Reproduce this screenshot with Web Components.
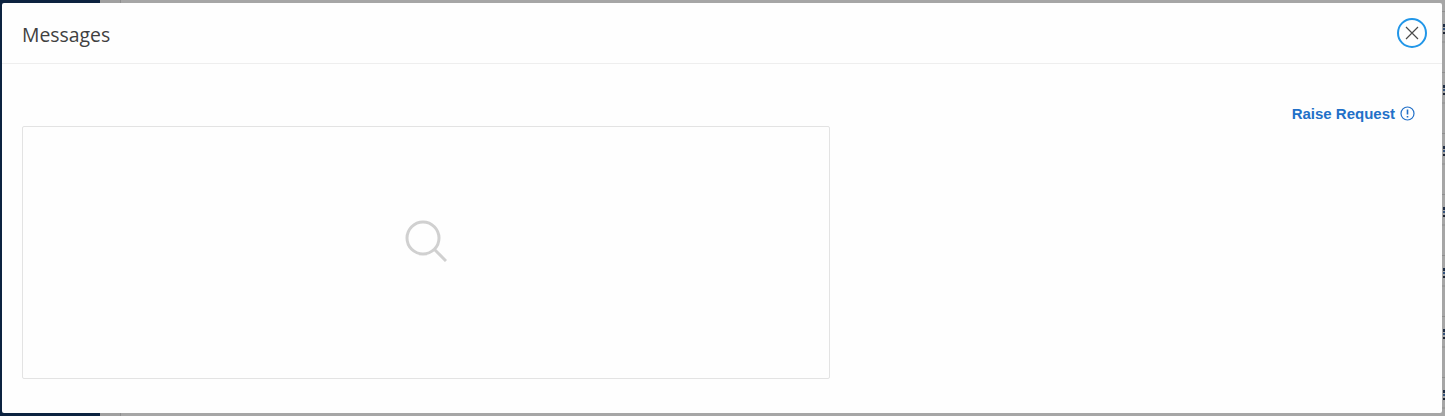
<!DOCTYPE html>
<html>
<head>
<meta charset="utf-8">
<title>Messages</title>
<style>
  html, body { margin: 0; height: 100%; overflow: hidden; }
</style>
</head>
<body>
<app-backdrop>
  <message-dialog heading="Messages">
    <raise-request slot="actions"></raise-request>
    <empty-panel></empty-panel>
  </message-dialog>
</app-backdrop>

<script>
/* Dimmed page behind the dialog: navy sidebar, grey content, and the
 * dots of the table row menus peeking out on the right edge
 */
class AppBackdrop extends HTMLElement {
  constructor() {
    super()
    this.attachShadow({ mode: 'open' })
    this.shadowRoot.innerHTML = `
      <style>
        :host {
          display: block;
          position: relative;
          width: 1445px;
          height: 416px;
          box-sizing: border-box;
          padding: 3px 3px 3px 2px;
          overflow: hidden;
          background:
            linear-gradient(to bottom, #1f2d44 0 3px, transparent 3px 4px, #33527a 4px 6px, transparent 6px 8px, #1f2533 8px 10px, transparent 10px) 1443px 24px / 2px 61px repeat-y,
            linear-gradient(to bottom, #8f8f8f 0 1px, transparent 1px) 1442px 11px / 3px 30.5px repeat-y,
            linear-gradient(to right, #0c2340 0, #0c2340 100px, #a0a0a0 100px, #a0a0a0 120px, #8f8f8f 120px, #8f8f8f 121px, #a6a6a6 121px);
        }
      </style>
      <slot></slot>`
  }
}

/* The dialog: header with title and close button, then the body */
class MessageDialog extends HTMLElement {
  constructor() {
    super()
    this.attachShadow({ mode: 'open' })
    this.shadowRoot.innerHTML = `
      <style>
        :host {
          display: flex;
          flex-direction: column;
          height: 100%;
          background: #fefefe;
          border-radius: 2px;
          font-family: "Open Sans", sans-serif;
        }

        header {
          display: flex;
          align-items: center;
          justify-content: space-between;
          height: 61px;
          padding: 0 15px 0 20px;
          border-bottom: 1px solid #eeeeee;
        }

        h1 {
          margin: 2px 0 0;
          font-size: 19.4px;
          font-weight: 500;
          color: #404040;
        }

        button {
          display: flex;
          align-items: center;
          justify-content: center;
          box-sizing: border-box;
          width: 30px;
          height: 30px;
          padding: 0;
          background: none;
          border: 2px solid #2196e8;
          border-radius: 50%;
        }

        main {
          flex: 1;
          display: flex;
          flex-direction: column;
          padding: 40px 27px 34px 20px;
        }

        .actions {
          display: flex;
          justify-content: flex-end;
          height: 22px;
        }
      </style>
      <header>
        <h1 id="heading"></h1>
        <button aria-label="Close">
          <svg width="14" height="14" viewBox="0 0 14 14">
            <path d="M1 1 L13 13 M13 1 L1 13" stroke="#4a4a4a" stroke-width="1.2" fill="none"/>
          </svg>
        </button>
      </header>
      <main>
        <div class="actions"><slot name="actions"></slot></div>
        <slot></slot>
      </main>`
  }

  connectedCallback() {
    this.shadowRoot.getElementById('heading').textContent = this.getAttribute('heading')
  }
}

/* Blue link with a small circled exclamation mark */
class RaiseRequest extends HTMLElement {
  constructor() {
    super()
    this.attachShadow({ mode: 'open' })
    this.shadowRoot.innerHTML = `
      <style>
        :host {
          display: flex;
          align-items: center;
          gap: 5px;
          height: 18px;
          font: 700 15px "Liberation Sans", sans-serif;
          color: #2270c8;
        }

        svg { display: block; }
      </style>
      <span>Raise Request</span>
      <svg width="15" height="15" viewBox="0 0 15 15">
        <circle cx="7.5" cy="7.5" r="6.5" stroke="#2270c8" stroke-width="1.2" fill="none"/>
        <path d="M7.5 3.6 V8.6 M7.5 10 V11.4" stroke="#2270c8" stroke-width="1.6" fill="none"/>
      </svg>`
  }
}

/* Empty results box with a pale magnifier above the middle */
class EmptyPanel extends HTMLElement {
  constructor() {
    super()
    this.attachShadow({ mode: 'open' })
    this.shadowRoot.innerHTML = `
      <style>
        :host {
          display: flex;
          align-items: center;
          justify-content: center;
          box-sizing: border-box;
          width: 808px;
          height: 253px;
          padding-bottom: 24px;
          background: #fefefe;
          border: 1px solid #e3e3e3;
          border-radius: 2px;
        }
      </style>
      <svg width="42" height="42" viewBox="0 0 42 42">
        <circle cx="18" cy="18" r="16" stroke="#d0d0d0" stroke-width="3" fill="none"/>
        <path d="M29.5 29.5 L41 41" stroke="#d0d0d0" stroke-width="3" fill="none"/>
      </svg>`
  }
}

window.customElements.define('app-backdrop', AppBackdrop)
window.customElements.define('message-dialog', MessageDialog)
window.customElements.define('raise-request', RaiseRequest)
window.customElements.define('empty-panel', EmptyPanel)
</script>
</body>
</html>
